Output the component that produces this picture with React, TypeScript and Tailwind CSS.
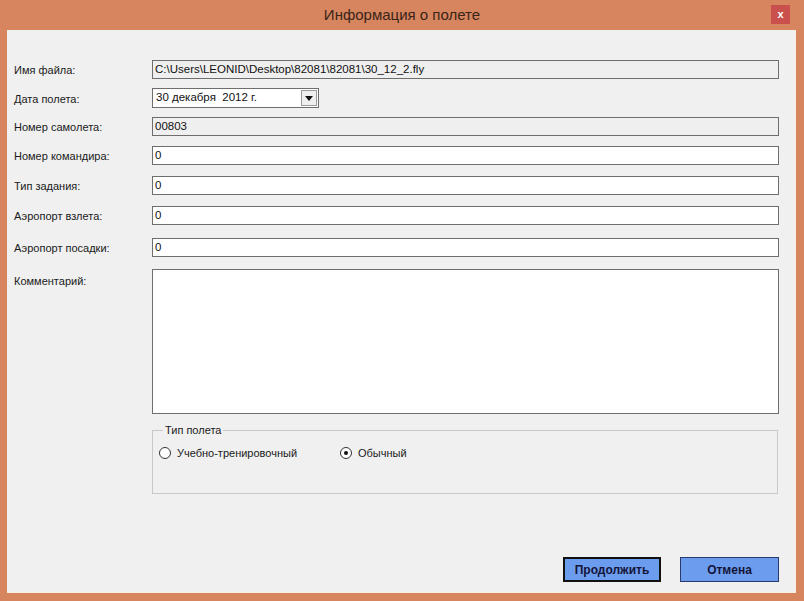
import React from 'react';

const font = { fontFamily: '"Liberation Sans", Arial, sans-serif' };

function Row({ label, children, top }: { label: string; children: React.ReactNode; top: string }) {
  return (
    <div className={`flex items-center h-[19px] ${top}`}>
      <div className="w-[138px] shrink-0 text-[11px] leading-[19px] text-[#1a1a1a] pt-[2px]">{label}</div>
      {children}
    </div>
  );
}

function Field({ value, readOnly }: { value: string; readOnly?: boolean }) {
  return (
    <div
      className={`h-[19px] flex-1 border border-[#6e6e6e] px-[2px] flex items-center text-[11.5px] leading-none text-[#111] ${
        readOnly ? 'bg-[#efefef]' : 'bg-white'
      }`}
    >
      {value}
    </div>
  );
}

function Radio({ checked, label }: { checked?: boolean; label: string }) {
  return (
    <div className="flex items-center gap-[6px] text-[11px] text-[#1a1a1a]">
      <span className="w-[12px] h-[12px] rounded-full border border-[#333] bg-white flex items-center justify-center">
        {checked && <span className="w-[4px] h-[4px] rounded-full bg-[#111]" />}
      </span>
      {label}
    </div>
  );
}

export default function App() {
  return (
    <div className="w-[804px] h-[601px] bg-[#d6855f] flex flex-col" style={font}>
      <div className="h-[30px] relative flex items-center justify-center shrink-0">
        <span className="text-[15px] text-[#3a2418]">Информация о полете</span>
        <div className="absolute left-[771px] top-[5px] w-[19px] h-[19px] bg-[#c9504c] flex items-center justify-center text-white text-[11px] font-bold leading-none">
          x
        </div>
      </div>
      <div className="ml-[7px] mr-[8px] mb-[8px] flex-1 bg-[#f0f0f0] border-r border-b border-[#fbeee0] pl-[7px] pr-[16px] pt-[30px] flex flex-col">
        <Row label="Имя файла:" top="">
          <Field value="C:\Users\LEONID\Desktop\82081\82081\30_12_2.fly" readOnly />
        </Row>
        <div className="flex items-center h-[20px] mt-[9px]">
          <div className="w-[138px] shrink-0 text-[11px] leading-[19px] text-[#1a1a1a] pt-[2px]">Дата полета:</div>
          <div className="w-[167px] h-[20px] border border-[#6e6e6e] bg-white flex items-center text-[11.5px] text-[#111]">
            <span className="flex-1 pl-[3px]">30 декабря&nbsp; 2012 г.</span>
            <span className="w-[16px] h-[16px] mr-[1px] bg-[#efefef] border border-[#9a9a9a] flex items-center justify-center">
              <svg width="8" height="5" viewBox="0 0 8 5">
                <path d="M0 0 H8 L4 5 Z" fill="#111" />
              </svg>
            </span>
          </div>
        </div>
        <Row label="Номер самолета:" top="mt-[9px]">
          <Field value="00803" readOnly />
        </Row>
        <Row label="Номер командира:" top="mt-[10px]">
          <Field value="0" />
        </Row>
        <Row label="Тип задания:" top="mt-[11px]">
          <Field value="0" />
        </Row>
        <Row label="Аэропорт взлета:" top="mt-[11px]">
          <Field value="0" />
        </Row>
        <Row label="Аэропорт посадки:" top="mt-[13px]">
          <Field value="0" />
        </Row>
        <div className="flex mt-[12px]">
          <div className="w-[138px] shrink-0 text-[11px] text-[#1a1a1a] pt-[4px]">Комментарий:</div>
          <div className="flex-1 h-[145px] border border-[#6e6e6e] bg-white" />
        </div>
        <div className="ml-[138px] mr-[1px] mt-[16px] h-[64px] border border-[#c8c8c8] relative">
          <span className="absolute left-[10px] top-[-8px] bg-[#f0f0f0] px-[2px] text-[11px] text-[#1a1a1a] leading-[15px]">
            Тип полета
          </span>
          <div className="flex pl-[6px] pt-[14px]">
            <div className="w-[181px]">
              <Radio label="Учебно-тренировочный" />
            </div>
            <Radio checked label="Обычный" />
          </div>
        </div>
        <div className="flex-1" />
        <div className="flex justify-end gap-[19px] mb-[10px]">
          <button className="w-[98px] h-[25px] bg-[#6c9ced] border-2 border-[#111] text-[12px] font-bold text-[#14143a]">
            Продолжить
          </button>
          <button className="w-[99px] h-[25px] bg-[#6c9ced] border border-[#2a3a6a] text-[12px] font-bold text-[#14143a]">
            Отмена
          </button>
        </div>
      </div>
    </div>
  );
}
